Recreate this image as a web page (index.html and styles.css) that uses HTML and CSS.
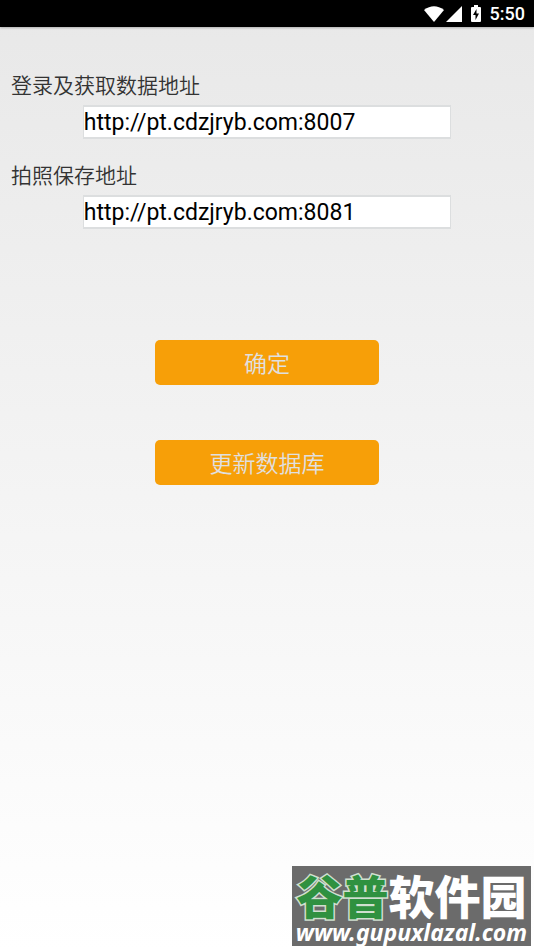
FILE: index.html
```html
<!DOCTYPE html>
<html lang="zh-CN">
<head>
<meta charset="utf-8">
<meta name="viewport" content="width=device-width, initial-scale=1">
<title>地址设置</title>
<link rel="stylesheet" href="styles.css">
</head>
<body>
<header class="status-bar">
  <svg class="wifi" viewBox="0 0 20 16" width="20" height="16" aria-hidden="true"><path d="M0 4Q10-3.500 20 4L10 16Z"/></svg>
  <svg class="signal" viewBox="0 0 16 16" width="16" height="16" aria-hidden="true"><path d="M0 16L16 0V16Z"/></svg>
  <svg class="battery" viewBox="0 0 10 17" width="10" height="17" aria-hidden="true"><path fill-rule="evenodd" d="M3 0H7V2H9Q10 2 10 3V16Q10 17 9 17H1Q0 17 0 16V3Q0 2 1 2H3ZM5.500 4L2 10H4.500V15L8 8.500H5.500Z"/></svg>
  <time class="clock">5:50</time>
</header>
<main class="page">
  <form class="settings">
    <div class="field">
      <label for="data-url">登录及获取数据地址</label>
      <input id="data-url" type="text" value="http://pt.cdzjryb.com:8007">
    </div>
    <div class="field">
      <label for="photo-url">拍照保存地址</label>
      <input id="photo-url" type="text" value="http://pt.cdzjryb.com:8081">
    </div>
    <div class="actions">
      <button type="submit">确定</button>
      <button type="button">更新数据库</button>
    </div>
  </form>
</main>
<aside class="watermark">
  <div class="brand"><span class="brand-green">谷普</span>软件园</div>
  <div class="site">www.gupuxlazal.com</div>
</aside>
</body>
</html>
```
FILE: styles.css
```css
* {
  box-sizing: border-box;
}

body {
  display: flex;
  flex-direction: column;
  min-height: 100vh;
  margin: 0;
  background: linear-gradient(#e8e8e8, #fff);
  font-family: Roboto, "Noto Sans CJK SC", sans-serif;
}

.status-bar {
  display: flex;
  align-items: center;
  justify-content: flex-end;
  height: 27px;
  padding-right: 9px;
  background: #000;
  box-shadow: 0 1px 2px rgba(0, 0, 0, 0.25);
  color: #fff;
}

.status-bar svg {
  fill: #fff;
}

.signal {
  margin-left: 2px;
}

.battery {
  margin: 0 9px;
}

.clock {
  font-size: 18px;
  font-weight: 500;
  line-height: 27px;
}

.page {
  flex: 1;
  padding-top: 44px;
}

.field {
  display: flex;
  flex-direction: column;
  margin-bottom: 22px;
}

.field label {
  padding: 0 11px;
  margin-bottom: 4px;
  color: #333;
  font-size: 21px;
  font-weight: 350;
  line-height: 30px;
}

.field input {
  width: 69%;
  height: 34px;
  margin: 0 auto;
  padding: 0;
  border: 2px solid #dcdedf;
  border-width: 2px 1px;
  border-radius: 0;
  background: #fff;
  color: #000;
  font: 23px/30px Roboto, sans-serif;
}

.actions {
  display: flex;
  flex-direction: column;
  align-items: center;
  gap: 55px;
  margin-top: 111px;
}

.actions button {
  width: 42%;
  height: 45px;
  padding: 0;
  border: 0;
  border-radius: 5px;
  background: #f79f08;
  color: #e0e0e0;
  font: 350 23px/45px "Noto Sans CJK SC", sans-serif;
}

.watermark {
  position: absolute;
  right: 3px;
  bottom: 4px;
  width: 239px;
  height: 80px;
  background: #6b6b6b;
  color: #fff;
  text-align: center;
  white-space: nowrap;
}

.brand {
  padding-top: 4px;
  font: 900 46px/48px "Noto Sans CJK SC", sans-serif;
}

.brand-green {
  color: #2f9140;
  -webkit-text-stroke: 3px #d0e0d0;
  paint-order: stroke fill;
}

.site {
  padding-top: 2px;
  font: italic 700 23px/24px "Noto Sans", sans-serif;
}
```
